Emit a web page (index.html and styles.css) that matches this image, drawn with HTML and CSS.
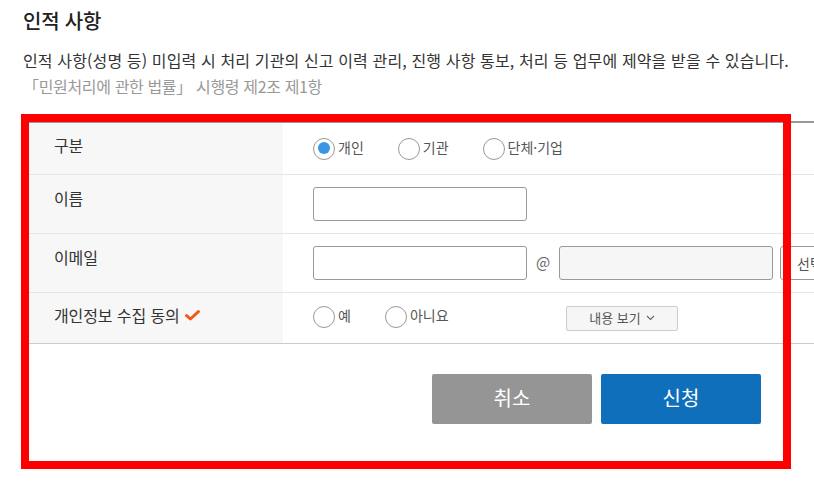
FILE: index.html
```html
<!DOCTYPE html>
<html lang="ko">
<head>
<meta charset="utf-8">
<title>인적 사항</title>
<link rel="stylesheet" href="styles.css">
</head>
<body>
<div class="page">
  <h2 class="title">인적 사항</h2>
  <p class="desc">인적 사항(성명 등) 미입력 시 처리 기관의 신고 이력 관리, 진행 사항 통보, 처리 등 업무에 제약을 받을 수 있습니다.<br><span class="law">「민원처리에 관한 법률」 시행령 제2조 제1항</span></p>

  <div class="form-table">
    <div class="row row-type">
      <div class="th">구분</div>
      <div class="td">
        <label class="radio"><input type="radio" name="type" checked><span>개인</span></label>
        <label class="radio"><input type="radio" name="type"><span>기관</span></label>
        <label class="radio"><input type="radio" name="type"><span>단체·기업</span></label>
      </div>
    </div>
    <div class="row row-input">
      <div class="th">이름</div>
      <div class="td"><input class="text" type="text"></div>
    </div>
    <div class="row row-input">
      <div class="th">이메일</div>
      <div class="td">
        <input class="text" type="text">
        <span class="at">@</span>
        <input class="text disabled" type="text" disabled>
        <div class="select">선택</div>
      </div>
    </div>
    <div class="row row-agree">
      <div class="th">개인정보 수집 동의
        <svg class="check" width="15" height="11" viewBox="0 0 15 11"><path d="M1.6 5.6 L5.4 9 L13.4 1.6" fill="none" stroke="#f5561a" stroke-width="3" stroke-linecap="round" stroke-linejoin="round"/></svg>
      </div>
      <div class="td">
        <div class="radio-group">
          <label class="radio"><input type="radio" name="agree"><span>예</span></label>
          <label class="radio"><input type="radio" name="agree"><span>아니요</span></label>
        </div>
        <button class="view-btn" type="button">내용 보기
          <svg width="9" height="6" viewBox="0 0 9 6"><path d="M1 1 L4.5 4.5 L8 1" fill="none" stroke="#666" stroke-width="1.1"/></svg>
        </button>
      </div>
    </div>
  </div>

  <div class="actions">
    <button class="btn btn-cancel" type="button">취소</button>
    <button class="btn btn-submit" type="button">신청</button>
  </div>
</div>
<div class="highlight"></div>
</body>
</html>
```

FILE: styles.css
```css
html, body {
  margin: 0;
  padding: 0;
  background: #fff;
}
body {
  width: 814px;
  height: 481px;
  overflow: hidden;
  position: relative;
  font-family: "Noto Sans CJK KR", "Noto Sans", sans-serif;
  color: #333;
}
.page {
  padding-left: 23px;
}
.title {
  margin: 0;
  padding-top: 8px;
  font-size: 20px;
  line-height: 26px;
  font-weight: 500;
  letter-spacing: -0.2px;
  color: #222;
}
.desc {
  margin: 13px 0 0;
  font-size: 16px;
  line-height: 26px;
  letter-spacing: 0.13px;
  color: #333;
}
.law {
  color: #999;
  letter-spacing: -0.35px;
}
.form-table {
  margin-top: 22px;
  width: 860px;
  border-top: 2px solid #999;
  border-bottom: 1px solid #ccc;
}
.row {
  display: grid;
  grid-template-columns: 260px 1fr;
  border-bottom: 1px solid #e5e5e5;
}
.row:last-child {
  border-bottom: none;
}
.row-type { height: 51px; }
.row-input { height: 58px; }
.row-agree { height: 50px; }
.th {
  background: #f7f7f7;
  display: flex;
  align-items: center;
  padding-left: 31px;
  padding-bottom: 7px;
  font-size: 16px;
  letter-spacing: -0.1px;
  color: #333;
}
.row-input .th {
  padding-bottom: 13px;
}
.check {
  margin-left: 5px;
  margin-top: 2px;
}
.td {
  display: flex;
  align-items: center;
  padding-left: 30px;
}
.radio {
  display: inline-flex;
  align-items: center;
  margin-right: 34px;
  font-size: 14px;
  color: #555;
}
.radio span {
  padding-bottom: 3px;
}
.radio input {
  appearance: none;
  -webkit-appearance: none;
  margin: 0 3px 0 0;
  width: 22px;
  height: 22px;
  border: 1.5px solid #999;
  border-radius: 50%;
  background: #fff;
  box-sizing: border-box;
  position: relative;
}
.radio input:checked::after {
  content: "";
  position: absolute;
  left: 3.5px;
  top: 3.5px;
  width: 12px;
  height: 12px;
  border-radius: 50%;
  background: #3a96e5;
}
.row-agree .td .radio-group {
  width: 253px;
  display: flex;
  margin-top: -3px;
}
.text {
  width: 214px;
  height: 34px;
  box-sizing: border-box;
  border: 1px solid #999;
  border-radius: 3px;
  background: #fff;
  margin: 0;
}
.text.disabled {
  background: #f6f6f6;
}
.at {
  width: 32px;
  text-align: center;
  font-size: 15px;
  color: #666;
  padding-bottom: 3px;
}
.select {
  margin-left: 7px;
  width: 120px;
  height: 34px;
  box-sizing: border-box;
  border: 1px solid #999;
  border-radius: 3px;
  padding-left: 16px;
  display: flex;
  align-items: center;
  font-size: 14px;
  color: #555;
}
.view-btn {
  width: 112px;
  height: 25px;
  box-sizing: border-box;
  border: 1px solid #ccc;
  border-radius: 2px;
  background: #f6f6f6;
  font-family: inherit;
  font-size: 13px;
  color: #555;
  display: flex;
  align-items: center;
  justify-content: center;
  gap: 5px;
  padding: 0 0 1px;
}
.actions {
  display: flex;
  justify-content: flex-end;
  gap: 9px;
  margin-top: 30px;
  padding-right: 53px;
}
.btn {
  width: 160px;
  height: 50px;
  border: none;
  border-radius: 2px;
  font-family: inherit;
  font-size: 20px;
  color: #fff;
  padding: 0 0 3px;
}
.btn-cancel { background: #959595; }
.btn-submit { background: #106fba; }
.highlight {
  position: absolute;
  left: 21px;
  top: 114px;
  width: 770px;
  height: 355px;
  box-sizing: border-box;
  border: 8px solid #ff0000;
  pointer-events: none;
}
```
